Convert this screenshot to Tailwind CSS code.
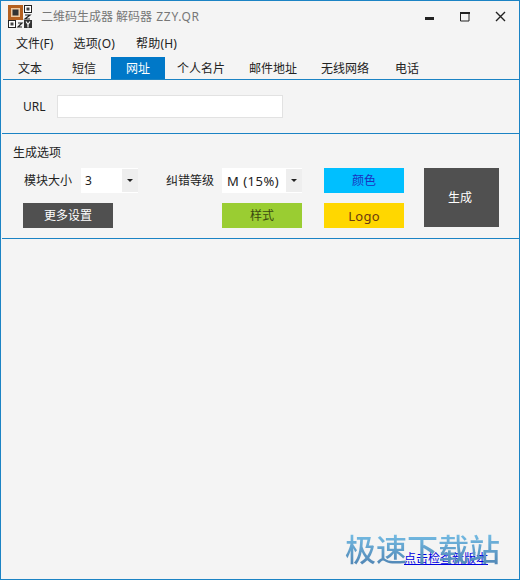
<!DOCTYPE html>
<html lang="zh-CN">
<head>
    <meta charset="UTF-8">
    <script src="https://cdn.jsdelivr.net/npm/@tailwindcss/browser@4"></script>
    <title>二维码生成器 解码器 ZZY.QR</title>
</head>
<body class="bg-[#f4f4f4]">
    <div class="relative w-[520px] h-[580px] overflow-hidden bg-[#f4f4f4] border border-[#1b83c4] text-[12px] leading-[16px] text-[#222] font-['Noto_Sans','Noto_Sans_CJK_SC',sans-serif]">
        <!-- title bar -->
        <div class="h-[31px] flex items-center">
            <svg class="ml-[7px] w-[24px] h-[23px]" viewBox="0 0 24 23">
                <rect width="15" height="15" fill="#b5601f"/>
                <rect x="3" y="3" width="9" height="9" fill="#f0c9a0"/>
                <rect x="4.5" y="4.5" width="6" height="6" fill="#333"/>
                <rect x="16.5" y="0.5" width="7" height="7" fill="#fff" stroke="#222"/>
                <rect x="18.5" y="2.5" width="3" height="3" fill="#444"/>
                <path d="M17 10h5l-5 4h5" fill="none" stroke="#222" stroke-width="1.2"/>
                <rect x="0.5" y="15.5" width="7" height="7" fill="#fff" stroke="#222"/>
                <rect x="2.5" y="17.5" width="3" height="3" fill="#444"/>
                <path d="M10 18h4l-4 4h4" fill="none" stroke="#222" stroke-width="1.2"/>
                <rect x="16" y="15" width="8" height="8" fill="#333"/>
                <path d="M18 16.500l2 3 2-3M20 19.500v3" fill="none" stroke="#fff" stroke-width="1.2"/>
            </svg>
            <span class="ml-[9px] text-[#777]">二维码生成器 解码器 <span class="ml-[1px] tracking-[0.7px]">ZZY.QR</span></span>
            <div class="ml-auto flex items-center mr-[13px]">
                <svg class="w-[10px] h-[10px]" viewBox="0 0 10 10"><rect y="5" width="9" height="3" fill="#222"/></svg>
                <svg class="ml-[25px] w-[10px] h-[10px]" viewBox="0 0 10 10"><path d="M.5 1.500h8.500v7.500h-8.500z" fill="none" stroke="#222"/><rect width="10" height="2" fill="#222"/></svg>
                <svg class="ml-[25px] w-[11px] h-[11px]" viewBox="0 0 11 11"><path d="M1 1l9 9M10 1l-9 9" fill="none" stroke="#222" stroke-width="1.400"/></svg>
            </div>
        </div>
        <!-- menu -->
        <div class="h-[24px] flex items-center pl-[15px]">
            <span>文件(F)</span>
            <span class="ml-[20px] tracking-[0.2px]">选项(O)</span>
            <span class="ml-[21px] tracking-[0.2px]">帮助(H)</span>
        </div>
        <!-- tabs -->
        <div class="mt-[1px] h-[23px] ml-[2px] border-b border-[#1b83c4] flex items-stretch">
            <span class="w-[54px] text-center pt-[4px]">文本</span>
            <span class="w-[54px] text-center pt-[4px]">短信</span>
            <span class="w-[54px] text-center pt-[4px] bg-[#0078c8] text-white">网址</span>
            <span class="w-[72px] text-center pt-[4px]">个人名片</span>
            <span class="w-[72px] text-center pt-[4px]">邮件地址</span>
            <span class="w-[72px] text-center pt-[4px]">无线网络</span>
            <span class="w-[52px] text-center pt-[4px]">电话</span>
        </div>
        <!-- url -->
        <div class="h-[53px] flex items-center pl-[22px]">
            <span class="w-[34px]">URL</span>
            <div class="w-[226px] h-[23px] bg-white border border-[#e2e2e2]"></div>
        </div>
        <!-- options -->
        <div class="ml-[1px] border-t border-b border-[#1b83c4] h-[106px]">
            <div class="pl-[11px] pt-[11px] h-[34px]">生成选项</div>
            <div class="pl-[21px] flex">
                <div class="w-[381px] flex flex-col gap-[10px]">
                    <div class="flex items-center h-[25px]">
                        <span class="ml-[1px] w-[57px]">模块大小</span>
                        <div class="w-[57px] h-[25px] bg-white flex items-center justify-between pl-[4px]">
                            <span>3</span>
                            <span class="w-[16px] h-[23px] bg-[#eee] flex items-center justify-center">
                                <span class="border-x-[3px] border-x-transparent border-t-[3px] border-t-[#222]"></span>
                            </span>
                        </div>
                        <span class="ml-[28px] w-[56px]">纠错等级</span>
                        <div class="w-[80px] h-[25px] bg-white flex items-center justify-between pl-[5px]">
                            <span class="text-[13px] tracking-[0.5px] whitespace-nowrap">M (15%)</span>
                            <span class="w-[16px] h-[23px] bg-[#eee] flex items-center justify-center">
                                <span class="border-x-[3px] border-x-transparent border-t-[3px] border-t-[#222]"></span>
                            </span>
                        </div>
                        <span class="ml-[22px] w-[80px] h-[25px] bg-[#00bfff] text-[#1c2fc0] flex items-center justify-center">颜色</span>
                    </div>
                    <div class="flex items-center h-[25px]">
                        <span class="w-[90px] h-[25px] bg-[#505050] text-white flex items-center justify-center">更多设置</span>
                        <span class="ml-[109px] w-[80px] h-[25px] bg-[#9acd32] text-[#3c4a10] flex items-center justify-center">样式</span>
                        <span class="ml-[22px] w-[80px] h-[25px] bg-[#ffd700] text-[#6b3a10] text-[13px] tracking-[0.3px] flex items-center justify-center">Logo</span>
                    </div>
                </div>
                <span class="ml-[20px] w-[75px] h-[59px] pr-[3px] bg-[#505050] text-white flex items-center justify-center">生成</span>
            </div>
        </div>
        <!-- bottom right -->
        <a class="absolute left-[403px] top-[550px] text-[#0000e0] underline whitespace-nowrap">点击检查新版本</a>
        <div class="absolute left-[344px] top-[526px] text-[31px] leading-[44px] font-medium whitespace-nowrap text-transparent bg-clip-text bg-linear-to-b from-[#7cc8ee] to-[#4a7cac]">极速下载站</div>
    </div>
</body>
</html>
